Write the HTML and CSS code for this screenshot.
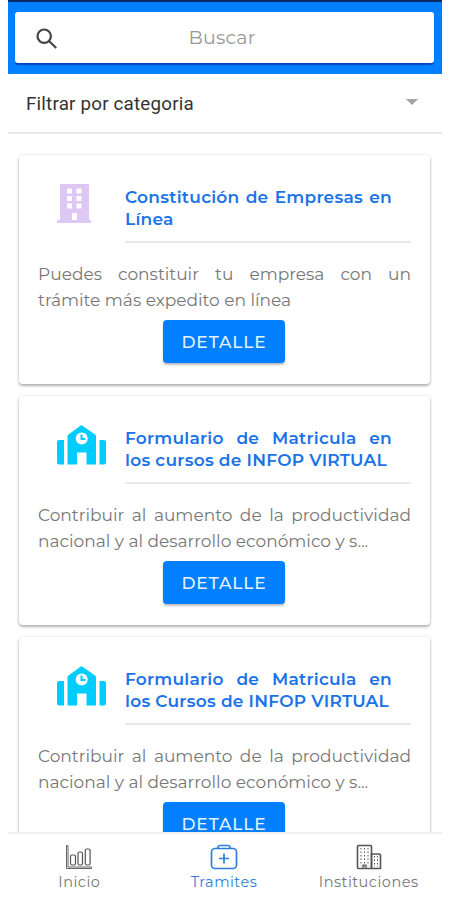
FILE: index.html
```html
<!DOCTYPE html>
<html lang="es">
<head>
    <meta charset="UTF-8">
    <meta name="viewport" content="width=device-width, initial-scale=1.0">
    <title>Tramites</title>
    <link rel="stylesheet" href="styles.css">
</head>
<body>
    <div class="app">
        <!-- Search -->
        <header class="header">
            <div class="search">
                <svg class="search-icon" viewBox="0 0 22 22">
                    <circle cx="8.2" cy="8.2" r="6.7"/>
                    <path d="M13 13l7.2 7"/>
                </svg>
                <input type="text" placeholder="Buscar">
            </div>
        </header>

        <!-- Category filter -->
        <div class="filter">
            <span>Filtrar por categoria</span>
            <span class="arrow"></span>
        </div>

        <!-- Card list -->
        <main class="cards">
            <article class="card">
                <div class="card-head">
                    <svg class="card-icon building" viewBox="0 0 50 40">
                        <path fill-rule="evenodd" d="M3 0h29v36h2v3H0v-3h3zM10 4.500h5v5h-5zM19.500 4.500h5v5h-5zM10 12h5v5h-5zM19.500 12h5v5h-5zM10 19.500h5v5h-5zM19.500 19.500h5v5h-5zM15 29h5v7h-5z"/>
                    </svg>
                    <div class="card-title">
                        <h2>Constitución de Empresas en Línea</h2>
                    </div>
                </div>
                <p>Puedes constituir tu empresa con un <span class="line">trámite más expedito en línea</span></p>
                <button>DETALLE</button>
            </article>

            <article class="card">
                <div class="card-head">
                    <svg class="card-icon school" viewBox="0 0 50 40">
                        <path d="M2 15h5v24.500H2a2 2 0 0 1-2-2V17a2 2 0 0 1 2-2zM42.500 15h4.500a2 2 0 0 1 2 2v20.500a2 2 0 0 1-2 2h-4.500z"/>
                        <path d="M10.500 39.500V11q0-1 1-1.600L23.500 .7q1-.7 2 0l12.500 8.700q1 .6 1 1.600V39.500h-9.500V27.500H20v12z"/>
                        <circle class="clock" cx="24.700" cy="13.500" r="6"/>
                        <path class="hands" d="M24.500 9.500v4.500h4"/>
                    </svg>
                    <div class="card-title">
                        <h2>Formulario de Matricula en <span class="line">los cursos de INFOP VIRTUAL</span></h2>
                    </div>
                </div>
                <p>Contribuir al aumento de la productividad <span class="line">nacional y al desarrollo económico y s...</span></p>
                <button>DETALLE</button>
            </article>

            <article class="card">
                <div class="card-head">
                    <svg class="card-icon school" viewBox="0 0 50 40">
                        <path d="M2 15h5v24.500H2a2 2 0 0 1-2-2V17a2 2 0 0 1 2-2zM42.500 15h4.500a2 2 0 0 1 2 2v20.500a2 2 0 0 1-2 2h-4.500z"/>
                        <path d="M10.500 39.500V11q0-1 1-1.600L23.500 .7q1-.7 2 0l12.500 8.700q1 .6 1 1.600V39.500h-9.500V27.500H20v12z"/>
                        <circle class="clock" cx="24.700" cy="13.500" r="6"/>
                        <path class="hands" d="M24.500 9.500v4.500h4"/>
                    </svg>
                    <div class="card-title">
                        <h2>Formulario de Matricula en <span class="line">los Cursos de INFOP VIRTUAL</span></h2>
                    </div>
                </div>
                <p>Contribuir al aumento de la productividad <span class="line">nacional y al desarrollo económico y s...</span></p>
                <button>DETALLE</button>
            </article>
        </main>

        <!-- Bottom tabs -->
        <nav class="tabs">
            <a class="tab">
                <svg viewBox="0 0 28 26">
                    <path class="axis" d="M1.500 1.500h1.500v21.500h23.500v1.500h-25z"/>
                    <rect x="5.500" y="11" width="5" height="10" rx="1.500"/>
                    <rect x="13" y="8" width="4.500" height="13" rx="1.500"/>
                    <rect x="20.300" y="5" width="4.800" height="16" rx="1.500"/>
                </svg>
                <span>Inicio</span>
            </a>
            <a class="tab active">
                <svg viewBox="0 0 28 26">
                    <rect x="1.500" y="4.500" width="25" height="20" rx="3.500"/>
                    <path d="M7.500 4.500Q8 1.500 10 1.500h8q2 0 2.500 3M14 9.500v10M9 14.500h10"/>
                </svg>
                <span>Tramites</span>
            </a>
            <a class="tab">
                <svg viewBox="0 0 28 26">
                    <rect class="tower" x="2.500" y="1.500" width="14" height="23" rx="1"/>
                    <path class="tower" d="M16.500 10h7.500q1.500 0 1.500 1.500v13h-9z"/>
                    <path class="windows" d="M6 4v18M9.500 4v20M13 4v18M19.500 12v11M22.500 12v11"/>
                    <path d="M8 24v-3h3v3"/>
                </svg>
                <span>Instituciones</span>
            </a>
        </nav>
    </div>
</body>
</html>
```
FILE: styles.css
```css
/* Base styles */
* {
    margin: 0;
    padding: 0;
    box-sizing: border-box;
}

body {
    font-family: Montserrat, Inter, sans-serif;
    background-color: #fff;
    color: #777;
}

.app {
    width: 434px;
    height: 900px;
    margin-left: 8px;
    display: flex;
    flex-direction: column;
    overflow: hidden;
}

/* Header */
.header {
    height: 74px;
    flex-shrink: 0;
    padding: 10px 8px 0 7px;
    background-color: #0080ff;
    border-top: 2px solid #0b2a66;
}

.search {
    height: 51px;
    display: flex;
    align-items: center;
    background-color: #fff;
    border-radius: 3px;
    padding-left: 21px;
    box-shadow: 0 2px 1px #0048c0;
}

.search-icon {
    width: 22px;
    height: 22px;
    margin-top: 2px;
    fill: none;
    stroke: #444;
    stroke-width: 2.2;
}

.search input {
    flex: 1;
    min-width: 0;
    padding-right: 48px;
    border: none;
    outline: none;
    text-align: center;
    font-family: inherit;
    font-size: 19px;
    letter-spacing: 0.2px;
}

.search input::placeholder {
    color: #999;
}

/* Category filter */
.filter {
    height: 60px;
    flex-shrink: 0;
    display: flex;
    align-items: center;
    justify-content: space-between;
    padding: 2px 24px 0 18px;
    border-bottom: 2px solid #e9e9e9;
    color: #333;
    font-family: Roboto, sans-serif;
    font-size: 18.8px;
    letter-spacing: 0.2px;
}

.arrow {
    border: 6px solid transparent;
    border-top-color: #a3a3a3;
    border-bottom: none;
    margin-bottom: 4px;
}

/* Cards */
.cards {
    flex: 1;
    min-height: 0;
    overflow: hidden;
    padding: 21px 12px 0 11px;
    display: flex;
    flex-direction: column;
    gap: 12px;
}

.card {
    height: 229px;
    flex-shrink: 0;
    padding: 28px 19px 0 19px;
    border-radius: 4px;
    box-shadow: 0 2px 3px rgba(0, 0, 0, 0.28), 0 0 3px rgba(0, 0, 0, 0.12);
    display: flex;
    flex-direction: column;
    align-items: center;
}

.card-head {
    width: 100%;
    display: flex;
    align-items: flex-start;
    justify-content: space-between;
    padding-left: 19px;
}

.card-icon {
    width: 50px;
    height: 40px;
    margin-top: 1px;
}

.building {
    fill: #dfc7f3;
}

.school {
    fill: #00ccff;
}

.clock {
    fill: #fff;
}

.hands {
    fill: none;
    stroke: #00ccff;
    stroke-width: 2;
}

.card-title {
    width: 286px;
    height: 60px;
    padding: 4px 19px 0 0;
    border-bottom: 2px solid #e9e9e9;
}

.card h2 {
    color: #1a73e8;
    font-size: 17px;
    font-weight: 600;
    line-height: 21.5px;
    letter-spacing: 0.25px;
    text-align: justify;
}

.line {
    white-space: nowrap;
}

.card p {
    width: 100%;
    margin-top: 19px;
    font-size: 17px;
    line-height: 25.5px;
    text-align: justify;
}

.card button {
    width: 122px;
    height: 43px;
    margin: 7px 1px 0 0;
    flex-shrink: 0;
    border: none;
    border-radius: 4px;
    background-color: #0080ff;
    color: #e5f2ff;
    font-family: inherit;
    font-size: 17px;
    font-weight: 500;
    letter-spacing: 0.9px;
    box-shadow: 0 2px 2px rgba(0, 0, 0, 0.25);
}

/* Bottom tabs */
.tabs {
    height: 68px;
    flex-shrink: 0;
    display: grid;
    grid-template-columns: repeat(3, 1fr);
    border-top: 2px solid #efefef;
}

.tab {
    display: flex;
    flex-direction: column;
    align-items: center;
    padding: 10px 2px 0 0;
    font-size: 14.5px;
    line-height: 20px;
    letter-spacing: 0.5px;
}

.tab svg {
    width: 28px;
    height: 26px;
    margin-bottom: 2px;
    fill: none;
    stroke: #555;
    stroke-width: 1.2;
}

.tab .axis {
    stroke-width: 0.9;
}

.tab .tower {
    stroke-width: 1.6;
}

.tab .windows {
    stroke-width: 1;
    stroke-dasharray: 1.5 2;
}

.tab.active {
    color: #2f80dd;
}

.tab.active svg {
    stroke: #2f80dd;
    stroke-width: 1.7;
}
```
